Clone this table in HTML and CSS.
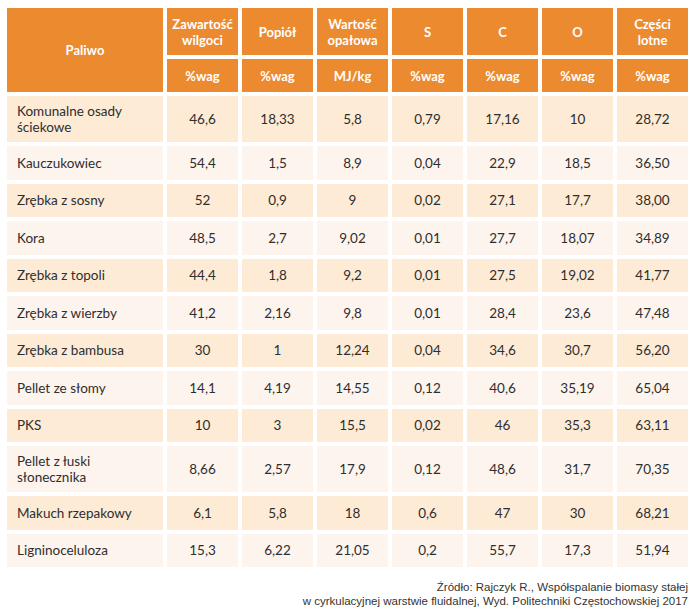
FILE: index.html
```html
<!DOCTYPE html>
<html lang="pl">
<head>
<meta charset="utf-8">
<title>Paliwa</title>
<link rel="stylesheet" href="styles.css">
</head>
<body>
<div class="table">
  <div class="hd name">Paliwo</div>
  <div class="hd">Zawartość<br>wilgoci</div>
  <div class="hd">Popiół</div>
  <div class="hd">Wartość<br>opałowa</div>
  <div class="hd">S</div>
  <div class="hd">C</div>
  <div class="hd">O</div>
  <div class="hd">Części<br>lotne</div>
  <div class="hd">%wag</div>
  <div class="hd">%wag</div>
  <div class="hd">MJ/kg</div>
  <div class="hd">%wag</div>
  <div class="hd">%wag</div>
  <div class="hd">%wag</div>
  <div class="hd">%wag</div>

  <div class="c a n">Komunalne osady<br>ściekowe</div><div class="c a">46,6</div><div class="c a">18,33</div><div class="c a">5,8</div><div class="c a">0,79</div><div class="c a">17,16</div><div class="c a">10</div><div class="c a">28,72</div>
  <div class="c b n">Kauczukowiec</div><div class="c b">54,4</div><div class="c b">1,5</div><div class="c b">8,9</div><div class="c b">0,04</div><div class="c b">22,9</div><div class="c b">18,5</div><div class="c b">36,50</div>
  <div class="c a n">Zrębka z sosny</div><div class="c a">52</div><div class="c a">0,9</div><div class="c a">9</div><div class="c a">0,02</div><div class="c a">27,1</div><div class="c a">17,7</div><div class="c a">38,00</div>
  <div class="c b n">Kora</div><div class="c b">48,5</div><div class="c b">2,7</div><div class="c b">9,02</div><div class="c b">0,01</div><div class="c b">27,7</div><div class="c b">18,07</div><div class="c b">34,89</div>
  <div class="c a n">Zrębka z topoli</div><div class="c a">44,4</div><div class="c a">1,8</div><div class="c a">9,2</div><div class="c a">0,01</div><div class="c a">27,5</div><div class="c a">19,02</div><div class="c a">41,77</div>
  <div class="c b n">Zrębka z wierzby</div><div class="c b">41,2</div><div class="c b">2,16</div><div class="c b">9,8</div><div class="c b">0,01</div><div class="c b">28,4</div><div class="c b">23,6</div><div class="c b">47,48</div>
  <div class="c a n">Zrębka z bambusa</div><div class="c a">30</div><div class="c a">1</div><div class="c a">12,24</div><div class="c a">0,04</div><div class="c a">34,6</div><div class="c a">30,7</div><div class="c a">56,20</div>
  <div class="c b n">Pellet ze słomy</div><div class="c b">14,1</div><div class="c b">4,19</div><div class="c b">14,55</div><div class="c b">0,12</div><div class="c b">40,6</div><div class="c b">35,19</div><div class="c b">65,04</div>
  <div class="c a n">PKS</div><div class="c a">10</div><div class="c a">3</div><div class="c a">15,5</div><div class="c a">0,02</div><div class="c a">46</div><div class="c a">35,3</div><div class="c a">63,11</div>
  <div class="c b n">Pellet z łuski<br>słonecznika</div><div class="c b">8,66</div><div class="c b">2,57</div><div class="c b">17,9</div><div class="c b">0,12</div><div class="c b">48,6</div><div class="c b">31,7</div><div class="c b">70,35</div>
  <div class="c a n">Makuch rzepakowy</div><div class="c a">6,1</div><div class="c a">5,8</div><div class="c a">18</div><div class="c a">0,6</div><div class="c a">47</div><div class="c a">30</div><div class="c a">68,21</div>
  <div class="c b n">Ligninoceluloza</div><div class="c b">15,3</div><div class="c b">6,22</div><div class="c b">21,05</div><div class="c b">0,2</div><div class="c b">55,7</div><div class="c b">17,3</div><div class="c b">51,94</div>
</div>
<p class="source">Źródło: Rajczyk R., Współspalanie biomasy stałej<br>w cyrkulacyjnej warstwie fluidalnej, Wyd. Politechniki Częstochowskiej 2017</p>
</body>
</html>
```

FILE: styles.css
```css
html, body {
  margin: 0;
  background: #ffffff;
}
body {
  padding: 8px 8px 0 7px;
  font-family: "Lato", "Open Sans", sans-serif;
  color: #333333;
}
.table {
  display: grid;
  grid-template-columns: 156px repeat(7, 71px);
  grid-template-rows: 47px 33px 46px repeat(8, 33.5px) 46px 33.5px 33.5px;
  gap: 4px;
}
.hd {
  background: #ec8a2f;
  color: #ffffff;
  font-weight: 700;
  font-size: 13px;
  line-height: 16px;
  display: flex;
  align-items: center;
  justify-content: center;
  text-align: center;
}
.hd.name {
  grid-row: span 2;
}
.c {
  display: flex;
  align-items: center;
  justify-content: center;
  text-align: center;
  font-size: 13.5px;
  line-height: 16px;
  color: #2e2e2e;
}
.c.n {
  justify-content: flex-start;
  text-align: left;
  padding-left: 10px;
}
.a { background: #fdebd6; }
.b { background: #fef4ee; }
.source {
  margin: 13px 0 0 0;
  text-align: right;
  font-family: "Liberation Sans", sans-serif;
  font-size: 11.5px;
  line-height: 14px;
  color: #333333;
}
```
